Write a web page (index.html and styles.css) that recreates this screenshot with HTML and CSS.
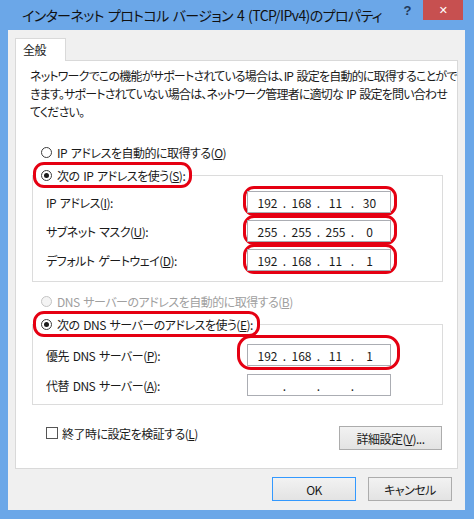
FILE: index.html
```html
<!DOCTYPE html>
<html lang="ja">
<head>
    <meta charset="UTF-8">
    <title>インターネット プロトコル バージョン 4 (TCP/IPv4)のプロパティ</title>
    <link rel="stylesheet" href="styles.css">
</head>
<body>

<div class="window">
    <div class="titlebar">
        <span class="title">インターネット プロトコル バージョン 4 (TCP/IPv4)のプロパティ</span>
        <span class="help">?</span>
        <span class="close">✕</span>
    </div>

    <div class="client">
        <div class="tabs">
            <div class="tab">全般</div>
        </div>

        <div class="panel">
            <p class="desc">
                <span>ネットワークでこの機能がサポートされている場合は、IP 設定を自動的に取得することがで</span>
                <span>きます。サポートされていない場合は、ネットワーク管理者に適切な IP 設定を問い合わせ</span>
                <span>てください。</span>
            </p>

            <div class="radio"><span class="dot"></span>IP アドレスを自動的に取得する(<u>O</u>)</div>

            <fieldset class="group group-ip">
                <legend class="ring legend"><span class="dot on"></span>次の IP アドレスを使う(<u>S</u>):</legend>
                <div class="row">
                    <span>IP アドレス(<u>I</u>):</span>
                    <span class="ring ring-ip">
                        <span class="ipbox"><span class="oct">192</span><span class="sep">.</span><span class="oct">168</span><span class="sep">.</span><span class="oct">11</span><span class="sep">.</span><span class="oct">30</span></span>
                    </span>
                </div>
                <div class="row">
                    <span>サブネット マスク(<u>U</u>):</span>
                    <span class="ring ring-ip">
                        <span class="ipbox"><span class="oct">255</span><span class="sep">.</span><span class="oct">255</span><span class="sep">.</span><span class="oct">255</span><span class="sep">.</span><span class="oct">0</span></span>
                    </span>
                </div>
                <div class="row">
                    <span>デフォルト ゲートウェイ(<u>D</u>):</span>
                    <span class="ring ring-ip">
                        <span class="ipbox"><span class="oct">192</span><span class="sep">.</span><span class="oct">168</span><span class="sep">.</span><span class="oct">11</span><span class="sep">.</span><span class="oct">1</span></span>
                    </span>
                </div>
            </fieldset>

            <div class="radio disabled"><span class="dot"></span>DNS サーバーのアドレスを自動的に取得する(<u>B</u>)</div>

            <fieldset class="group group-dns">
                <legend class="ring legend"><span class="dot on"></span>次の DNS サーバーのアドレスを使う(<u>E</u>):</legend>
                <div class="row">
                    <span>優先 DNS サーバー(<u>P</u>):</span>
                    <span class="ring ring-dns">
                        <span class="ipbox"><span class="oct">192</span><span class="sep">.</span><span class="oct">168</span><span class="sep">.</span><span class="oct">11</span><span class="sep">.</span><span class="oct">1</span></span>
                    </span>
                </div>
                <div class="row">
                    <span>代替 DNS サーバー(<u>A</u>):</span>
                    <span class="ipbox"><span class="oct"></span><span class="sep">.</span><span class="oct"></span><span class="sep">.</span><span class="oct"></span><span class="sep">.</span><span class="oct"></span></span>
                </div>
            </fieldset>

            <div class="bottom-row">
                <div class="check"><span class="box"></span>終了時に設定を検証する(<u>L</u>)</div>
                <button class="btn btn-adv">詳細設定(<u>V</u>)...</button>
            </div>
        </div>

        <div class="footer">
            <button class="btn btn-default">OK</button>
            <button class="btn">キャンセル</button>
        </div>
    </div>
</div>

</body>
</html>
```

FILE: styles.css
```css
body {
    margin: 0;
    background-color: #6ba7e8;
    font-family: "Meiryo UI", "Noto Sans CJK JP", sans-serif;
    font-size: 12px;
    font-feature-settings: "palt";
    letter-spacing: -0.5px;
    word-spacing: 1.5px;
    color: #1a1a1a;
}
.window {
    width: 474px;
    height: 519px;
    display: flex;
    flex-direction: column;
}
.titlebar {
    height: 30px;
    display: flex;
    align-items: flex-start;
}
.title {
    font-size: 14px;
    letter-spacing: -0.6px;
    color: #111;
    margin: 5px 0 0 22px;
    flex: 1;
    min-width: 0;
    white-space: nowrap;
    overflow: hidden;
}
.help {
    font-family: "Liberation Sans", sans-serif;
    font-weight: bold;
    font-size: 13px;
    color: #23395b;
    margin: 3px 12px 0 0;
}
.close {
    width: 40px;
    height: 20px;
    margin-right: 11px;
    background-color: #c75050;
    color: #fff;
    font-family: "DejaVu Sans", sans-serif;
    font-size: 11px;
    font-weight: bold;
    display: flex;
    align-items: center;
    justify-content: center;
    flex-shrink: 0;
}
.client {
    background-color: #f0f0f0;
    margin: 0 9px 9px 8px;
    flex: 1;
    padding: 8px 7px 0 7px;
}
.tabs {
    display: flex;
    height: 23px;
}
.tab {
    width: 51px;
    height: 23px;
    box-sizing: border-box;
    background-color: #fff;
    border: 1px solid #d9d9d9;
    border-bottom: none;
    padding-left: 7px;
    line-height: 22px;
    position: relative;
    z-index: 1;
}
.panel {
    background-color: #fff;
    border: 1px solid #d9d9d9;
    height: 409px;
    box-sizing: border-box;
    padding: 0 14px 0 16px;
    margin-top: -1px;
}
.desc {
    margin: 6px 0 0 -2px;
    line-height: 18px;
    letter-spacing: -0.8px;
}
.desc span {
    display: block;
    white-space: nowrap;
}
.radio {
    display: flex;
    align-items: center;
    height: 20px;
    padding-left: 9px;
    margin-top: 21px;
}
.radio.disabled {
    color: #a0a0a0;
    margin-top: 9px;
}
.dot {
    width: 11px;
    height: 11px;
    border: 1px solid #3c3c3c;
    border-radius: 50%;
    background-color: #fff;
    margin-right: 5px;
    box-sizing: border-box;
    display: flex;
    align-items: center;
    justify-content: center;
    flex-shrink: 0;
}
.dot.on::after {
    content: "";
    width: 5px;
    height: 5px;
    border-radius: 50%;
    background-color: #1a1a1a;
}
.disabled .dot {
    border-color: #c4c4c4;
    background-color: #f4f4f4;
}
.group {
    border: 1px solid #dcdcdc;
    margin: 0;
    padding: 3px 51px 10px 0;
    width: 411px;
    box-sizing: border-box;
}
.group-dns {
    padding-top: 7px;
    padding-bottom: 8px;
}
.ring {
    border: 3px solid #e50012;
    border-radius: 11px;
}
.legend {
    display: flex;
    align-items: center;
    height: 26px;
    box-sizing: border-box;
    padding: 0 4px 0 5px;
    margin-left: 0;
}
.row {
    display: flex;
    align-items: center;
    justify-content: space-between;
    height: 22px;
    padding-left: 13px;
}
.row + .row {
    margin-top: 7px;
}
.group-dns .row + .row {
    margin-top: 8px;
}
.ipbox {
    width: 144px;
    height: 22px;
    box-sizing: border-box;
    border: 1px solid #abadb3;
    background-color: #fff;
    display: flex;
    align-items: center;
    padding-left: 5px;
    letter-spacing: 0;
}
.oct {
    width: 29px;
    text-align: center;
}
.sep {
    width: 5px;
    text-align: center;
}
.ring-ip {
    padding: 2px 3px 0 1px;
    margin: -5px -6px -3px -4px;
}
.ring-dns {
    border-radius: 14px;
    padding: 6px 6px 1px 7px;
    margin: -9px -9px -4px -10px;
}
.bottom-row {
    display: flex;
    justify-content: space-between;
    align-items: flex-start;
    margin-top: 21px;
    width: 410px;
}
.check {
    display: flex;
    align-items: center;
    padding-left: 14px;
    height: 14px;
}
.box {
    width: 12px;
    height: 12px;
    border: 1px solid #555;
    box-sizing: border-box;
    margin-right: 4px;
}
.btn {
    font-family: inherit;
    font-size: 12px;
    font-feature-settings: "palt";
    letter-spacing: -0.5px;
    color: #1a1a1a;
    background: linear-gradient(#f2f2f2, #e3e3e3);
    border: 1px solid #acacac;
    border-radius: 0;
    height: 24px;
    padding: 0;
}
.btn-adv {
    width: 103px;
}
.footer {
    display: flex;
    justify-content: flex-end;
    gap: 12px;
    padding: 8px 6px 0 0;
}
.footer .btn {
    width: 84px;
}
.btn-default {
    border-color: #3399ff;
}
```
